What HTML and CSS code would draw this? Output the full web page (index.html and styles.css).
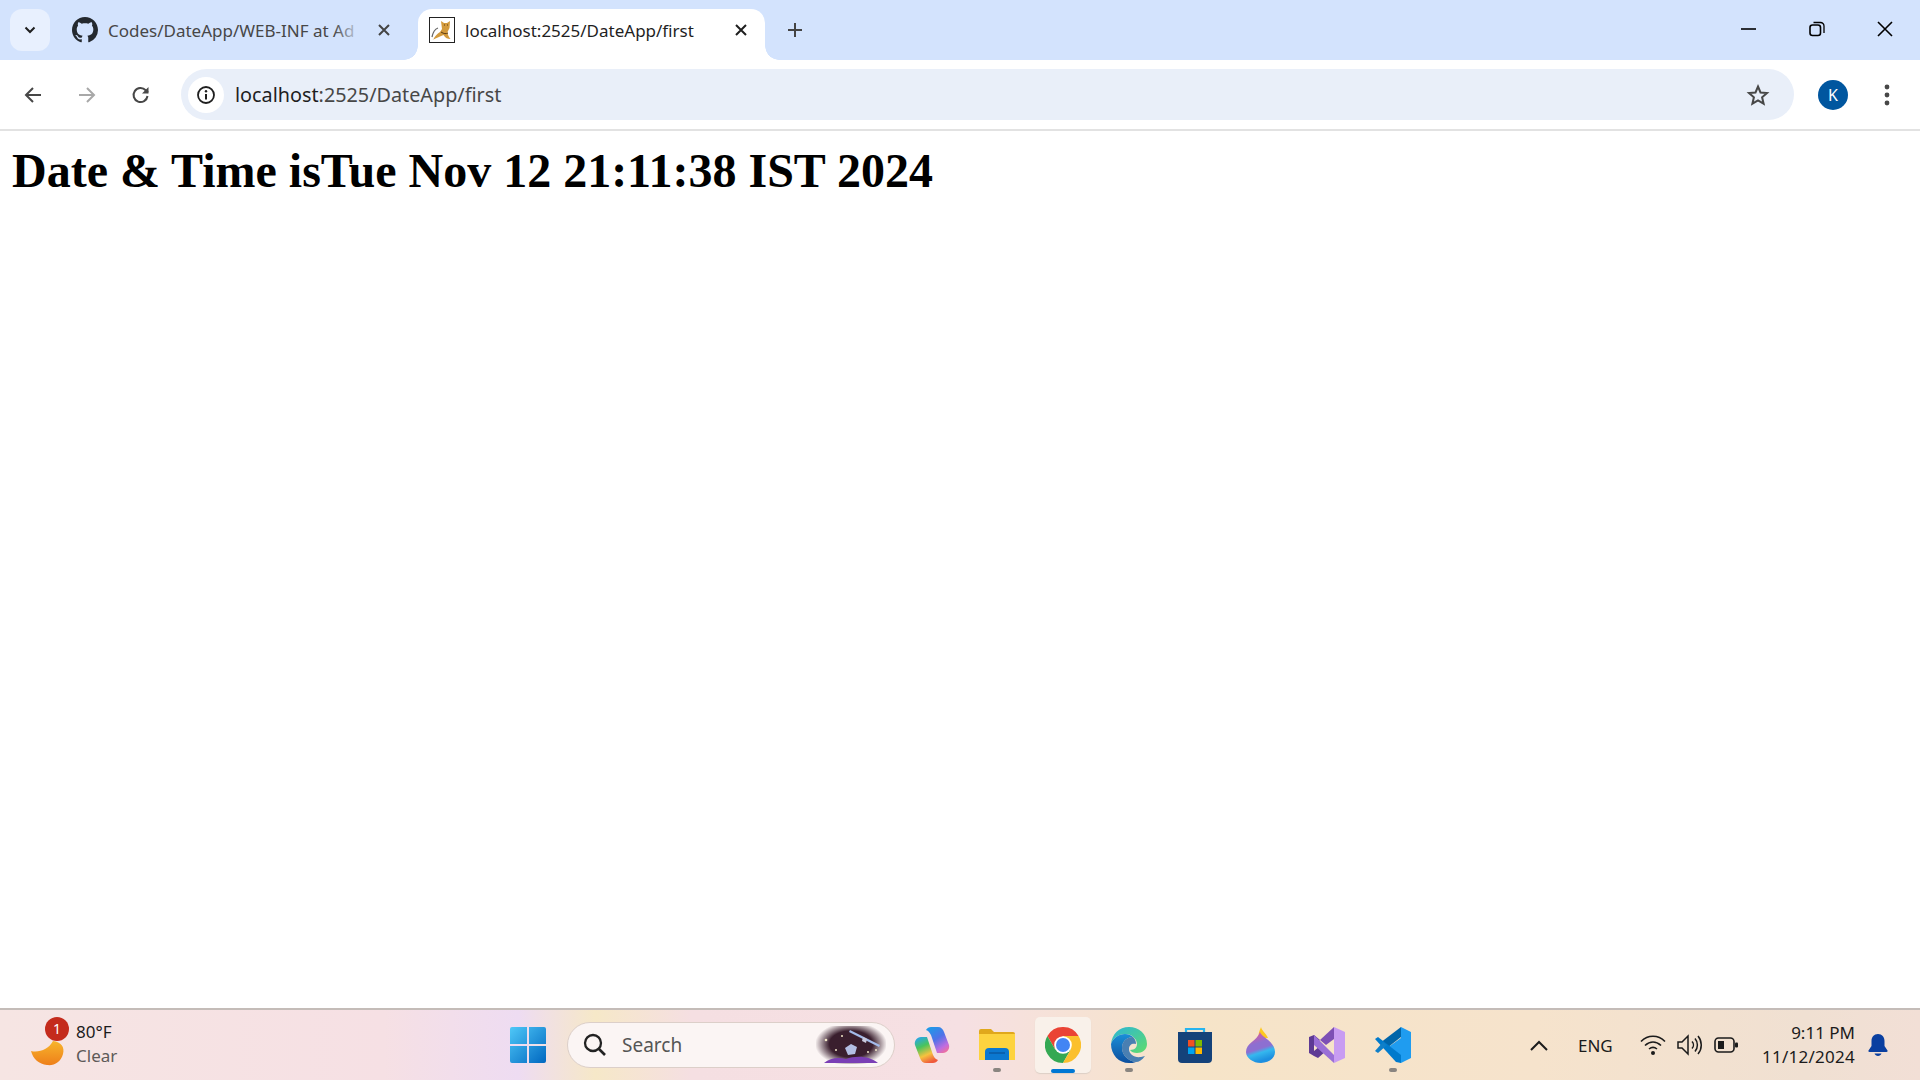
FILE: index.html
```html
<!DOCTYPE html>
<html lang="en">
<head>
  <meta charset="UTF-8">
  <title>localhost:2525/DateApp/first</title>
  <link rel="stylesheet" href="styles.css">
</head>
<body>
  <div class="tabstrip">
    <div class="tab-search">
      <svg width="12" height="8" viewBox="0 0 12 8"><path d="M1.500 1.500 6 6l4.500-4.500" fill="none" stroke="#1f1f1f" stroke-width="2"/></svg>
    </div>
    <div class="tab">
      <svg class="favicon" width="26" height="26" viewBox="0 0 16 16"><path fill="#24292f" d="M8 0C3.580 0 0 3.580 0 8c0 3.540 2.290 6.530 5.470 7.590.4.070.55-.17.55-.38 0-.19-.01-.82-.01-1.490-2.010.37-2.530-.49-2.690-.94-.09-.23-.48-.94-.82-1.130-.28-.15-.68-.52-.01-.53.63-.01 1.080.58 1.230.82.72 1.210 1.870.87 2.330.66.070-.52.28-.87.51-1.070-1.780-.2-3.640-.89-3.640-3.950 0-.87.31-1.590.82-2.150-.08-.2-.36-1.020.08-2.120 0 0 .67-.21 2.200.82.64-.18 1.320-.27 2-.27s1.360.09 2 .27c1.530-1.040 2.200-.82 2.200-.82.44 1.100.16 1.920.08 2.120.51.56.82 1.270.82 2.150 0 3.070-1.870 3.750-3.650 3.950.29.25.54.73.54 1.480 0 1.070-.01 1.930-.01 2.200 0 .21.15.46.55.38A8 8 0 0 0 16 8c0-4.420-3.580-8-8-8z"/></svg>
      <span class="tab-title">Codes/DateApp/WEB-INF at Ad</span>
      <span class="tab-fade"></span>
      <svg class="tab-close" width="12" height="12" viewBox="0 0 12 12"><path d="M1 1l10 10M11 1 1 11" stroke="#444" stroke-width="2"/></svg>
    </div>
    <div class="tab tab-active">
      <svg class="favicon" width="26" height="26" viewBox="0 0 26 26">
        <rect x=".5" y=".5" width="25" height="25" fill="#fff" stroke="#222"/>
        <path d="M3 20c1-5 3-8 6-9" fill="none" stroke="#666" stroke-width="1.300"/>
        <path d="M4 23c2-4 4-6 7-8l2-3-1-8 3 2h3l3-2-.5 7-2 4c0 2 1 5 3 7-3 0-5-1-7-4-3 1-7 3-11 5z" fill="#d39a3c"/>
        <path d="M15 8h1M18 8h1M12 15c3 2 5 2 7 1" stroke="#5b3a12" stroke-width="1" fill="none"/>
      </svg>
      <span class="tab-title-active">localhost:2525/DateApp/first</span>
      <svg class="tab-close" width="12" height="12" viewBox="0 0 12 12"><path d="M1 1l10 10M11 1 1 11" stroke="#1f1f1f" stroke-width="2"/></svg>
    </div>
    <svg class="new-tab" width="16" height="16" viewBox="0 0 16 16"><path d="M8 1v14M1 8h14" stroke="#444" stroke-width="2"/></svg>
    <div class="window-buttons">
      <svg width="16" height="16" viewBox="0 0 16 16"><path d="M0 8h15" stroke="#000" stroke-width="1.600"/></svg>
      <svg width="16" height="16" viewBox="0 0 16 16"><rect x="1" y="4" width="10.500" height="10.500" rx="2.500" fill="none" stroke="#000" stroke-width="1.600"/><path d="M4.500 1.500h7a3.500 3.500 0 0 1 3.500 3.500v7" fill="none" stroke="#000" stroke-width="1.300"/></svg>
      <svg width="16" height="16" viewBox="0 0 16 16"><path d="M1 1l14 14M15 1 1 15" stroke="#000" stroke-width="1.600"/></svg>
    </div>
  </div>

  <div class="toolbar">
    <svg class="nav-icon" width="20" height="20" viewBox="0 0 20 20"><path d="M18 10H3M10 3 3 10l7 7" fill="none" stroke="#474747" stroke-width="2"/></svg>
    <svg class="nav-icon" width="20" height="20" viewBox="0 0 20 20"><path d="M2 10h15M10 3l7 7-7 7" fill="none" stroke="#a8a8a8" stroke-width="2"/></svg>
    <svg class="nav-icon" width="20" height="20" viewBox="0 0 20 20"><path d="M16.500 11a7 7 0 1 1-1.800-5.700L17 7.500" fill="none" stroke="#474747" stroke-width="2"/><path d="M17.500 2v6.500H11z" fill="#474747"/></svg>
    <div class="omnibox">
      <div class="site-info">
        <svg width="20" height="20" viewBox="0 0 20 20"><circle cx="10" cy="10" r="8" fill="none" stroke="#1f1f1f" stroke-width="1.800"/><path d="M10 9v5.500" stroke="#1f1f1f" stroke-width="2"/><circle cx="10" cy="6.300" r="1.200" fill="#1f1f1f"/></svg>
      </div>
      <span class="url"><span class="url-host">localhost</span>:2525/DateApp/first</span>
      <svg class="star" width="24" height="24" viewBox="0 0 24 24"><path d="M12 3.500l2.500 6 6.500.6-4.900 4.200 1.500 6.400-5.600-3.400-5.600 3.400 1.500-6.400L3 10.100l6.500-.6z" fill="none" stroke="#474747" stroke-width="2"/></svg>
    </div>
    <div class="avatar">K</div>
    <svg class="menu-dots" width="6" height="22" viewBox="0 0 6 22"><circle cx="3" cy="3" r="2.400" fill="#474747"/><circle cx="3" cy="11" r="2.400" fill="#474747"/><circle cx="3" cy="19" r="2.400" fill="#474747"/></svg>
  </div>

  <main class="page">
    <h1>Date &amp; Time isTue Nov 12 21:11:38 IST 2024</h1>
  </main>

  <div class="taskbar">
    <div class="weather">
      <div class="weather-icon">
        <svg width="36" height="26" viewBox="0 0 36 26"><defs><linearGradient id="moon" x1="0" y1="0" x2="0" y2="1"><stop offset="0" stop-color="#f7b52c"/><stop offset="1" stop-color="#ee7f1a"/></linearGradient></defs><path d="M1 10c8 2 18-2 22-10 8 1 12 6 10 13-2 8-9 12-16 11C9 23 3 18 1 10z" fill="url(#moon)"/></svg>
        <span class="badge">1</span>
      </div>
      <div class="weather-text">
        <span class="temp">80°F</span>
        <span class="cond">Clear</span>
      </div>
    </div>

    <div class="task-center">
      <svg class="task-icon start" width="36" height="36" viewBox="0 0 36 36"><defs><linearGradient id="win" x1="0" y1="0" x2="1" y2="1"><stop offset="0" stop-color="#4fc8f8"/><stop offset="1" stop-color="#0067c0"/></linearGradient></defs><path fill="url(#win)" d="M0 2a2 2 0 0 1 2-2h15v17H0zM19 0h15a2 2 0 0 1 2 2v15H19zM0 19h17v17H2a2 2 0 0 1-2-2zM19 19h17v15a2 2 0 0 1-2 2H19z"/></svg>

      <div class="searchbox">
        <svg width="24" height="24" viewBox="0 0 24 24"><circle cx="10" cy="10" r="8" fill="none" stroke="#222" stroke-width="2.300"/><path d="M16 16l6 6" stroke="#222" stroke-width="2.600"/></svg>
        <span class="search-label">Search</span>
        <svg class="search-art" width="70" height="38" viewBox="0 0 70 38"><defs><radialGradient id="space"><stop offset=".6" stop-color="#3a1f2e"/><stop offset="1" stop-color="#3a1f2e" stop-opacity="0"/></radialGradient></defs><ellipse cx="35" cy="18" rx="36" ry="22" fill="url(#space)"/><path d="M34 4l30 15-1 2L33 6z" fill="#a3bbea"/><path d="M47 11l4 2-1 4-4-2z" fill="#c9c9dc"/><path d="M29 22l6-4 6 3-2 7-7 1z" fill="#b3bfe4"/><path d="M8 37c6-5 14-6 22-4 10-4 24-3 32 4z" fill="#7a3fb5"/><g fill="#f3e8c8"><circle cx="10" cy="14" r="1.300"/><circle cx="26" cy="10" r="1"/><circle cx="52" cy="26" r="1"/><circle cx="20" cy="24" r="1"/><circle cx="60" cy="24" r="1"/></g></svg>
      </div>

      <svg class="task-icon copilot" width="36" height="36" viewBox="0 0 36 36"><defs><linearGradient id="cop1" x1=".2" y1="0" x2=".8" y2="1"><stop offset="0" stop-color="#1e9ae8"/><stop offset=".45" stop-color="#4f72e8"/><stop offset=".8" stop-color="#c06de0"/><stop offset="1" stop-color="#f0709c"/></linearGradient><linearGradient id="cop2" x1=".2" y1="0" x2=".6" y2="1"><stop offset="0" stop-color="#2aa7e8"/><stop offset=".35" stop-color="#48c45c"/><stop offset=".7" stop-color="#f6c23e"/><stop offset="1" stop-color="#ef5a3c"/></linearGradient></defs><path fill="url(#cop1)" d="M12 3c1-2 3-3 5-3h7c3 0 5 2 6 5l5 13c1 4-2 8-6 8h-6l-5-15c-1-4-3-7-6-8z"/><path fill="url(#cop2)" d="M24 33c-1 2-3 3-5 3h-7c-3 0-5-2-6-5L1 18c-1-4 2-8 6-8h6l5 15c1 4 3 7 6 8z"/></svg>

      <div class="task-slot">
        <svg width="36" height="34" viewBox="0 0 36 34"><path fill="#e0a81c" d="M0 3a2 2 0 0 1 2-2h10l3 3h19a2 2 0 0 1 2 2v4H0z"/><path fill="#fdd33f" d="M0 6h36v26H0z"/><path fill="#0b78d0" d="M6 32v-8a4 4 0 0 1 4-4h16a4 4 0 0 1 4 4v8z"/><path d="M10 25h16" stroke="#0a5aa5" stroke-width="1.500"/></svg>
        <span class="run-dot"></span>
      </div>

      <div class="task-slot task-active">
        <svg width="36" height="36" viewBox="0 0 36 36"><path fill="#ea4335" d="M33.590 9A18 18 0 0 0 2.410 9l7.800 13.500L18 9z"/><path fill="#34a853" d="M2.410 9A18 18 0 0 0 18 36l7.790-13.500H10.210z"/><path fill="#fbc02d" d="M18 36A18 18 0 0 0 33.590 9H18l7.790 13.500z"/><circle cx="18" cy="18" r="8.800" fill="#fff"/><circle cx="18" cy="18" r="7" fill="#4285f4"/></svg>
        <span class="run-bar"></span>
      </div>

      <div class="task-slot">
        <svg width="36" height="36" viewBox="0 0 36 36"><defs><linearGradient id="edge1" x1="0" y1="0" x2="1" y2="1"><stop offset="0" stop-color="#2bb5d8"/><stop offset="1" stop-color="#5fdc6c"/></linearGradient><linearGradient id="edge2" x1="0" y1="0" x2="0" y2="1"><stop offset="0" stop-color="#1a8fd8"/><stop offset="1" stop-color="#0d4f9e"/></linearGradient></defs><path fill="url(#edge1)" d="M18 0c10 0 18 7 18 17 0 6-5 9-10 9-3 0-6-1-7-3 5 0 7-3 7-6 0-5-5-10-12-10C8 7 2 11 0 17 1 7 8 0 18 0z"/><path fill="url(#edge2)" d="M0 17c2-6 8-10 14-10 3 0 6 1 8 3-7 0-11 5-11 11 0 7 6 13 14 14-2 1-5 1-7 1C8 36 0 28 0 17z"/><path fill="#0f5ea8" d="M11 21c0-6 4-11 11-11 2 2 3 4 3 7-4-1-7 1-7 5 0 5 5 9 12 8l4-1c-3 4-6 6-9 6-8-1-14-7-14-14z" opacity=".75"/></svg>
        <span class="run-dot"></span>
      </div>

      <div class="task-slot">
        <svg width="36" height="36" viewBox="0 0 36 36"><path d="M9 8V2h18v6" fill="none" stroke="#27b4ef" stroke-width="2.200"/><path fill="#14427a" d="M1 5h34v27a4 4 0 0 1-4 4H5a4 4 0 0 1-4-4z"/><path fill="#f25022" d="M11 13h6.500v6.500H11z"/><path fill="#7fba00" d="M18.500 13H25v6.500h-6.500z"/><path fill="#00a4ef" d="M11 20.500h6.500V27H11z"/><path fill="#ffb900" d="M18.500 20.500H25V27h-6.500z"/></svg>
      </div>

      <div class="task-slot">
        <svg width="30" height="36" viewBox="0 0 30 36"><defs><linearGradient id="drop" x1="0" y1="0" x2=".3" y2="1"><stop offset="0" stop-color="#f0558f"/><stop offset=".45" stop-color="#8d6fd1"/><stop offset=".62" stop-color="#8d6fd1"/><stop offset=".75" stop-color="#35b8ee"/><stop offset="1" stop-color="#1d8fe0"/></linearGradient></defs><path fill="#fdc81f" d="M15 0c1 4 5 6 7 11H13C12 6 14 3 15 0z"/><path fill="url(#drop)" d="M14 5c1 5 15 9 15 20 0 6-6 11-14 11S0 31 0 25C0 16 11 14 14 5z"/></svg>
      </div>

      <div class="task-slot">
        <svg width="36" height="36" viewBox="0 0 36 36"><path fill="#c89cf2" d="M25 0l11 5v26l-11 5z"/><path fill="#7d4fb5" d="M25 0v12l-8 6-6-5z"/><path fill="#5e3a94" d="M0 10l5-2 6 5-6 5v6l6-5 6 5-8 7-4-2-5-3z"/><path fill="#9a6fd6" d="M5 8l20 20v8L5 18z"/></svg>
      </div>

      <div class="task-slot">
        <svg width="36" height="36" viewBox="0 0 36 36"><path fill="#1f9cf0" d="M26 0l10 5v26l-10 5-14-15 14-10z"/><path fill="#0065a9" d="M26 0v10L12 21l-7-5z"/><path fill="#007acc" d="M0 12l3-2 23 18v8l-5-1z"/><path fill="#0f7fc8" d="M0 24l3 2 9-8-4-3z"/></svg>
        <span class="run-dot"></span>
      </div>
    </div>

    <div class="tray">
      <svg class="tray-chevron" width="18" height="11" viewBox="0 0 18 11"><path d="M1 10l8-8 8 8" fill="none" stroke="#1b1b1b" stroke-width="2"/></svg>
      <span class="lang">ENG</span>
      <div class="tray-icons">
        <svg width="26" height="22" viewBox="0 0 26 22"><path d="M1 7.500c7-7 17-7 24 0M5 11.500c5-4.500 11-4.500 16 0M9 15c2.500-2 5.500-2 8 0" fill="none" stroke="#1b1b1b" stroke-width="1.600"/><circle cx="13" cy="19" r="2" fill="#1b1b1b"/></svg>
        <svg width="26" height="22" viewBox="0 0 26 22"><path d="M1 8h4l6-6v18l-6-6H1z" fill="none" stroke="#1b1b1b" stroke-width="1.500"/><path d="M15 7.500a5 5 0 0 1 0 7M18 4.500a10 10 0 0 1 0 13M21 2a14 14 0 0 1 0 18" fill="none" stroke="#1b1b1b" stroke-width="1.500"/></svg>
        <svg width="24" height="16" viewBox="0 0 24 16"><rect x="1" y="1" width="19" height="14" rx="3.500" fill="none" stroke="#1b1b1b" stroke-width="1.600"/><rect x="4" y="4" width="6" height="8" fill="#1b1b1b"/><rect x="21" y="5.500" width="3" height="5" rx="1" fill="#1b1b1b"/></svg>
      </div>
      <div class="clock">
        <span>9:11 PM</span>
        <span class="clock-date">11/12/2024</span>
      </div>
      <svg class="bell" width="20" height="24" viewBox="0 0 20 24"><path fill="#0a3fa0" d="M10 1c4 0 6.500 3 6.500 7v5l3 4.500c.3.700 0 1.500-1 1.500H1.500c-1 0-1.300-.8-1-1.500l3-4.500V8c0-4 2.500-7 6.500-7zM6.500 20.500h7c-.5 1.500-2 2.500-3.500 2.500s-3-1-3.500-2.500z"/></svg>
    </div>
  </div>
</body>
</html>
```

FILE: styles.css
```css
body {
  margin: 0;
  display: flex;
  flex-direction: column;
  height: 1080px;
  overflow: hidden;
  background-color: #fff;
  font-family: "Noto Sans", "Open Sans", sans-serif;
  color: #1f1f1f;
}

/* tab strip */
.tabstrip {
  display: flex;
  align-items: flex-start;
  height: 60px;
  background-color: #d3e3fd;
  flex-shrink: 0;
}

.tab-search {
  display: flex;
  align-items: center;
  justify-content: center;
  width: 40px;
  height: 42px;
  margin: 9px 0 0 10px;
  background-color: #e8f0fe;
  border-radius: 12px;
}

.tab {
  display: flex;
  align-items: center;
  position: relative;
  width: 368px;
  height: 42px;
  margin-top: 9px;
  padding-left: 22px;
  box-sizing: border-box;
}

.favicon {
  flex-shrink: 0;
}

.tab-title {
  width: 250px;
  margin-left: 10px;
  white-space: nowrap;
  font-size: 17px;
  color: #474747;
}

.tab-fade {
  position: absolute;
  left: 284px;
  top: 6px;
  width: 30px;
  height: 30px;
  background: linear-gradient(to right, rgba(211, 227, 253, 0), #d3e3fd 90%);
}

.tab-close {
  position: relative;
  margin-left: 20px;
}

.tab-active {
  width: 347px;
  height: 51px;
  padding-left: 11px;
  padding-bottom: 9px;
  background-color: #fff;
  border-radius: 14px 14px 0 0;
}

/* flared bottom corners of the active tab */
.tab-active::before,
.tab-active::after {
  content: "";
  position: absolute;
  bottom: 0;
  width: 14px;
  height: 14px;
}

.tab-active::before {
  left: -14px;
  background: radial-gradient(circle at 0 0, transparent 13.500px, #fff 14px);
}

.tab-active::after {
  right: -14px;
  background: radial-gradient(circle at 100% 0, transparent 13.500px, #fff 14px);
}

.tab-title-active {
  width: 228px;
  margin-left: 10px;
  white-space: nowrap;
  font-size: 17px;
  color: #1f1f1f;
}

.tab-active .tab-close {
  margin-left: 42px;
}

.new-tab {
  margin: 22px 0 0 22px;
}

.window-buttons {
  display: flex;
  align-items: center;
  gap: 52px;
  margin: 21px 0 0 auto;
  padding-right: 27px;
}

/* toolbar */
.toolbar {
  display: flex;
  align-items: center;
  height: 69px;
  flex-shrink: 0;
  background-color: #fff;
  border-radius: 12px 12px 0 0;
  border-bottom: 2px solid #e2e2e2;
}

.nav-icon {
  margin-left: 34px;
}

.nav-icon:first-child {
  margin-left: 23px;
}

.omnibox {
  display: flex;
  align-items: center;
  flex: 1;
  height: 51px;
  margin-left: 30px;
  padding: 0 8px 0 7px;
  background-color: #e9eff9;
  border-radius: 26px;
}

.site-info {
  display: flex;
  align-items: center;
  justify-content: center;
  width: 36px;
  height: 36px;
  background-color: #fff;
  border-radius: 50%;
}

.url {
  margin-left: 11px;
  font-size: 19.800px;
  color: #474747;
}

.url-host {
  color: #1f1f1f;
}

.star {
  margin-left: auto;
  margin-right: 16px;
}

.avatar {
  display: flex;
  align-items: center;
  justify-content: center;
  width: 30px;
  height: 30px;
  margin-left: 24px;
  background-color: #00569f;
  border-radius: 50%;
  color: #fff;
  font-size: 16px;
}

.menu-dots {
  margin: 0 30px 0 36px;
}

/* page content */
.page {
  flex: 1;
  padding: 12px;
}

h1 {
  margin: 0;
  font-family: "Liberation Serif", serif;
  font-size: 48px;
  font-weight: bold;
  color: #000;
}

/* windows taskbar */
.taskbar {
  display: flex;
  align-items: center;
  height: 70px;
  flex-shrink: 0;
  border-top: 2px solid #c4bcb8;
  background: linear-gradient(to right, #f6e5e3 0%, #f6e0e4 20%, #eedcf2 27%, #f6e8c8 31%, #f5dfe2 36%, #f6e0e3 50%, #f6e4c8 62%, #f6e3cc 80%, #f0e0d2 94%, #f2dfd6 100%);
}

.weather {
  display: flex;
  align-items: center;
  width: 472px;
  padding-left: 30px;
  box-sizing: border-box;
}

.weather-icon {
  position: relative;
  width: 36px;
  height: 26px;
  margin-top: 18px;
}

.badge {
  position: absolute;
  left: 15px;
  top: -24px;
  width: 24px;
  height: 24px;
  background-color: #c42b1c;
  border-radius: 50%;
  color: #fff;
  font-size: 14px;
  line-height: 24px;
  text-align: center;
}

.weather-text {
  display: flex;
  flex-direction: column;
  margin: -2px 0 0 10px;
  font-size: 17px;
  line-height: 24px;
}

.temp {
  color: #1b1b1b;
}

.cond {
  color: #5d5a58;
}

.task-center {
  display: flex;
  align-items: center;
  height: 100%;
  width: 960px;
}

.start {
  margin-left: 38px;
}

.searchbox {
  display: flex;
  align-items: center;
  width: 328px;
  height: 46px;
  margin-left: 21px;
  padding: 0 8px 0 15px;
  box-sizing: border-box;
  background-color: #fbf5f4;
  border: 1px solid #dccfc9;
  border-radius: 23px;
}

.search-label {
  margin-left: 15px;
  font-size: 19px;
  color: #555;
}

.search-art {
  margin-left: auto;
}

.copilot {
  margin-left: 19px;
}

.task-slot {
  position: relative;
  display: flex;
  align-items: center;
  justify-content: center;
  width: 56px;
  height: 56px;
  margin-left: 10px;
}

.copilot + .task-slot {
  margin-left: 19px;
}

.task-active {
  background-color: #f9f1ea;
  border-radius: 5px;
  box-shadow: 0 1px 1px #ddd0c6;
}

.run-dot {
  position: absolute;
  bottom: 1px;
  left: 24px;
  width: 8px;
  height: 4px;
  background-color: #8a8580;
  border-radius: 2px;
}

.run-bar {
  position: absolute;
  bottom: 0;
  left: 16px;
  width: 24px;
  height: 4px;
  background-color: #0078d4;
  border-radius: 2px;
}

.tray {
  display: flex;
  align-items: center;
  flex: 1;
  color: #1b1b1b;
}

.tray-chevron {
  margin-left: 98px;
}

.lang {
  margin-left: 30px;
  font-size: 17px;
}

.tray-icons {
  display: flex;
  align-items: center;
  gap: 11px;
  margin-left: 27px;
}

.clock {
  display: flex;
  flex-direction: column;
  align-items: flex-end;
  margin-left: auto;
  font-size: 17px;
  line-height: 24px;
}

.clock-date {
  letter-spacing: .25px;
}

.bell {
  margin: 0 32px 0 13px;
}
```
